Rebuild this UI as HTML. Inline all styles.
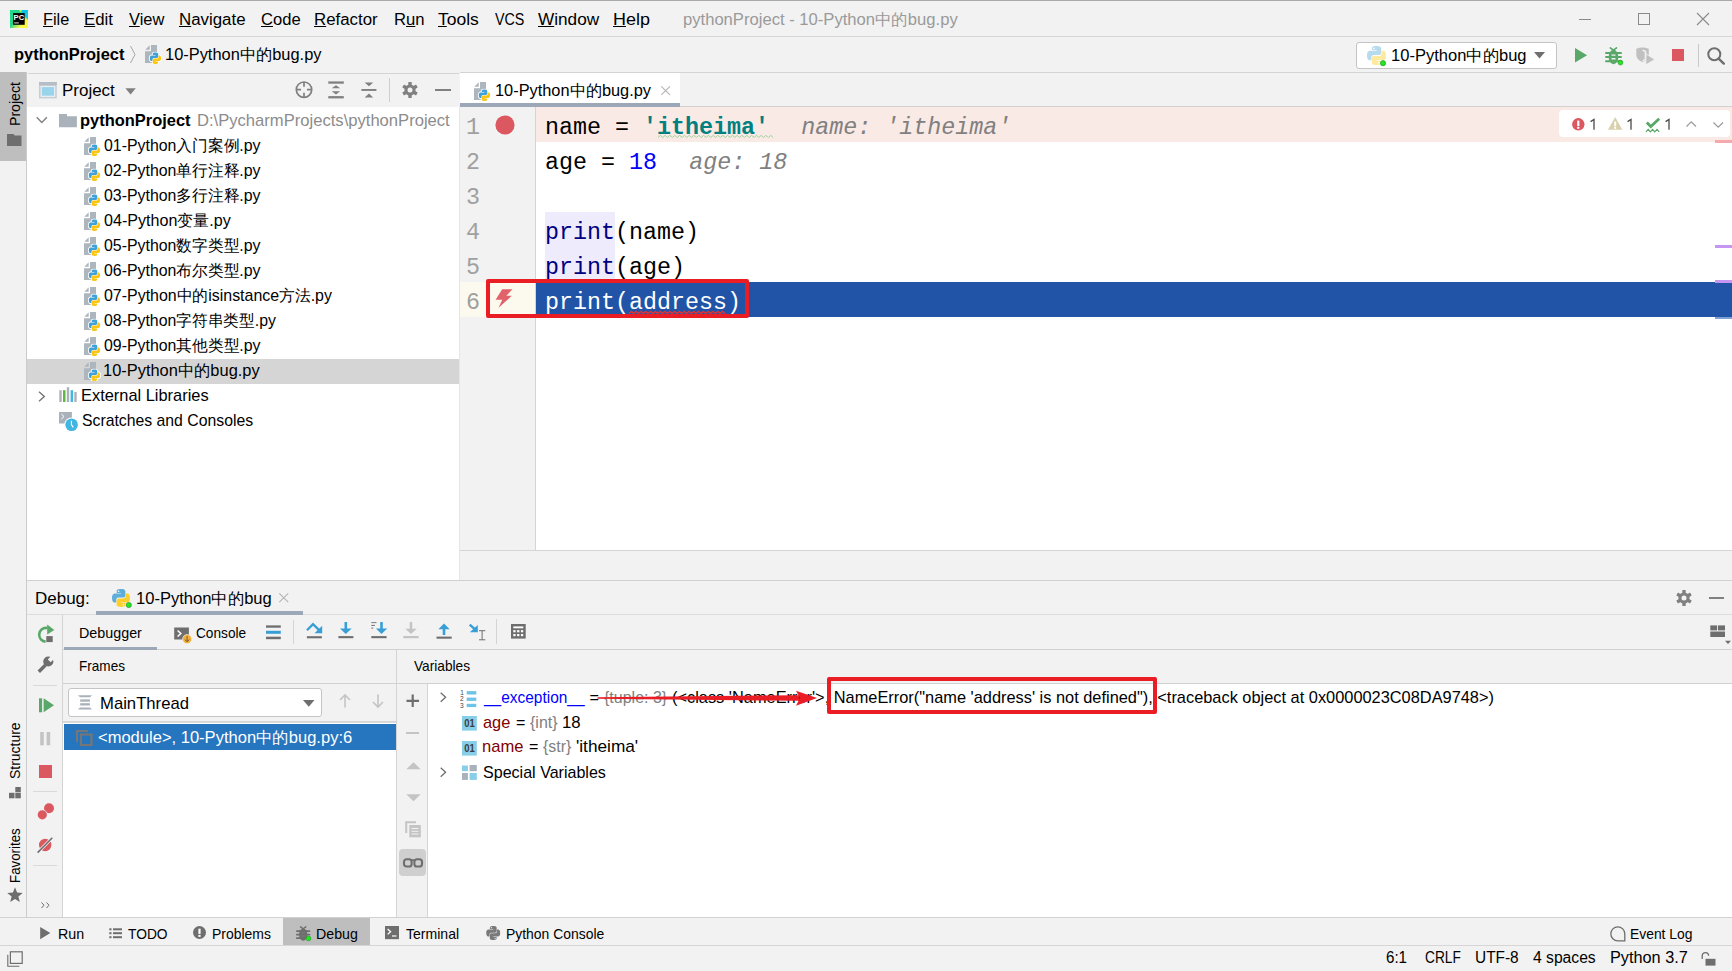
<!DOCTYPE html>
<html><head><meta charset="utf-8">
<style>
*{box-sizing:border-box;margin:0;padding:0}
html,body{width:1732px;height:971px;overflow:hidden;background:#f2f2f2;position:relative;font-family:"Liberation Sans",sans-serif;color:#000}
.a{position:absolute}
.t{position:absolute;z-index:1;white-space:pre;line-height:1;font-family:"Liberation Sans",sans-serif;transform-origin:0 0}
svg{position:absolute;overflow:visible}
u{text-decoration:underline;text-underline-offset:1.2px;text-decoration-thickness:1px}
</style></head><body>
<svg width="0" height="0" style="position:absolute;left:0;top:0">
<defs>
<symbol id="pyf" viewBox="0 0 17 19">
<path d="M0.3,4.7 L4.7,0.3 L4.7,4.7 Z" fill="#adb5bd"/>
<path d="M0,6.3 H6 V0 H12 V18 H0 Z" fill="#adb5bd"/>
<g transform="translate(4.8,7.6) scale(0.63)">
<path d="M8.9,0 C4.4,0 4.7,1.9 4.7,1.9 L4.7,3.9 L9,3.9 L9,4.5 L3,4.5 C3,4.5 0,4.2 0,8.9 C0,13.5 2.6,13.4 2.6,13.4 L4.2,13.4 L4.2,11.2 C4.2,11.2 4.1,8.6 6.7,8.6 L11,8.6 C11,8.6 13.4,8.6 13.4,6.3 L13.4,2.4 C13.4,2.4 13.8,0 8.9,0 Z M9.1,18 C13.6,18 13.3,16.1 13.3,16.1 L13.3,14.1 L9,14.1 L9,13.5 L15,13.5 C15,13.5 18,13.8 18,9.1 C18,4.5 15.4,4.6 15.4,4.6 L13.8,4.6 L13.8,6.8 C13.8,6.8 13.9,9.4 11.3,9.4 L7,9.4 C7,9.4 4.6,9.4 4.6,11.7 L4.6,15.6 C4.6,15.6 4.2,18 9.1,18 Z" fill="#fff" stroke="#fff" stroke-width="3" stroke-linejoin="round"/>
<path d="M8.9,0 C4.4,0 4.7,1.9 4.7,1.9 L4.7,3.9 L9,3.9 L9,4.5 L3,4.5 C3,4.5 0,4.2 0,8.9 C0,13.5 2.6,13.4 2.6,13.4 L4.2,13.4 L4.2,11.2 C4.2,11.2 4.1,8.6 6.7,8.6 L11,8.6 C11,8.6 13.4,8.6 13.4,6.3 L13.4,2.4 C13.4,2.4 13.8,0 8.9,0 Z" fill="#40a0d8"/>
<path d="M9.1,18 C13.6,18 13.3,16.1 13.3,16.1 L13.3,14.1 L9,14.1 L9,13.5 L15,13.5 C15,13.5 18,13.8 18,9.1 C18,4.5 15.4,4.6 15.4,4.6 L13.8,4.6 L13.8,6.8 C13.8,6.8 13.9,9.4 11.3,9.4 L7,9.4 C7,9.4 4.6,9.4 4.6,11.7 L4.6,15.6 C4.6,15.6 4.2,18 9.1,18 Z" fill="#fdc614"/>
</g>
</symbol>
</defs></svg>
<div class="a" style="left:0px;top:0px;width:1732px;height:1px;background:#a9a9a9;"></div>
<div class="a" style="left:0px;top:36px;width:1732px;height:1px;background:#d6d6d6;"></div>
<div class="a" style="left:0px;top:72px;width:26px;height:89px;background:#bebebe;"></div>
<div class="a" style="left:26px;top:72px;width:1px;height:845px;background:#cbcbcb;"></div>
<div class="a" style="left:28px;top:73px;width:431px;height:1px;background:#d4d4d4;"></div>
<div class="a" style="left:27px;top:107px;width:433px;height:473px;background:#fff;"></div>
<div class="a" style="left:27px;top:359px;width:432px;height:25px;background:#d5d5d5;"></div>
<div class="a" style="left:459px;top:107px;width:1px;height:473px;background:#e6e6e6;"></div>
<div class="a" style="left:460px;top:72px;width:1272px;height:1px;background:#d4d4d4;"></div>
<div class="a" style="left:680px;top:106px;width:1052px;height:1px;background:#d1d1d1;"></div>
<div class="a" style="left:460px;top:73px;width:220px;height:34px;background:#fff;"></div>
<div class="a" style="left:460px;top:103px;width:220px;height:4px;background:#9ca7b8;"></div>
<div class="a" style="left:460px;top:107px;width:1272px;height:443px;background:#fff;"></div>
<div class="a" style="left:460px;top:107px;width:75px;height:443px;background:#f2f2f2;"></div>
<div class="a" style="left:535px;top:107px;width:1px;height:443px;background:#d4d4d4;"></div>
<div class="a" style="left:536px;top:107px;width:1196px;height:35px;background:#faeae6;"></div>
<div class="a" style="left:460px;top:282px;width:75px;height:35px;background:#fcfaee;"></div>
<div class="a" style="left:536px;top:282px;width:1196px;height:35px;background:#2154a6;"></div>
<div class="a" style="left:460px;top:550px;width:1272px;height:1px;background:#d6d6d6;"></div>
<div class="a" style="left:27px;top:580px;width:1705px;height:1px;background:#d1d1d1;"></div>
<div class="a" style="left:27px;top:614px;width:1705px;height:1px;background:#dcdcdc;"></div>
<div class="a" style="left:96px;top:611px;width:207px;height:4px;background:#9ca7b8;"></div>
<div class="a" style="left:62px;top:615px;width:1px;height:302px;background:#d4d4d4;"></div>
<div class="a" style="left:63px;top:649px;width:1669px;height:1px;background:#d1d1d1;"></div>
<div class="a" style="left:64px;top:647px;width:93px;height:3px;background:#9ca7b8;"></div>
<div class="a" style="left:63px;top:683px;width:1669px;height:1px;background:#d1d1d1;"></div>
<div class="a" style="left:396px;top:650px;width:1px;height:267px;background:#d4d4d4;"></div>
<div class="a" style="left:63px;top:723px;width:333px;height:194px;background:#fff;"></div>
<div class="a" style="left:63px;top:722px;width:333px;height:1px;background:#dcdcdc;"></div>
<div class="a" style="left:64px;top:724px;width:332px;height:26px;background:#2675bf;"></div>
<div class="a" style="left:427px;top:684px;width:1px;height:233px;background:#d4d4d4;"></div>
<div class="a" style="left:428px;top:684px;width:1304px;height:233px;background:#fff;"></div>
<div class="a" style="left:0px;top:917px;width:1732px;height:1px;background:#d1d1d1;"></div>
<div class="a" style="left:283px;top:918px;width:87px;height:27px;background:#bebebe;"></div>
<div class="a" style="left:0px;top:945px;width:1732px;height:1px;background:#d6d6d6;"></div>
<div class="t" style="left:43.38px;top:11.50px;font-size:16px;color:#000;transform:scaleX(1.0168);"><u>F</u>ile</div>
<div class="t" style="left:83.95px;top:11.50px;font-size:16px;color:#000;transform:scaleX(1.0507);"><u>E</u>dit</div>
<div class="t" style="left:128.90px;top:11.50px;font-size:16px;color:#000;transform:scaleX(1.0277);"><u>V</u>iew</div>
<div class="t" style="left:178.95px;top:11.50px;font-size:16px;color:#000;transform:scaleX(1.0538);"><u>N</u>avigate</div>
<div class="t" style="left:261.00px;top:11.50px;font-size:16px;color:#000;transform:scaleX(1.0352);"><u>C</u>ode</div>
<div class="t" style="left:313.95px;top:11.50px;font-size:16px;color:#000;transform:scaleX(1.0525);"><u>R</u>efactor</div>
<div class="t" style="left:393.66px;top:11.50px;font-size:16px;color:#000;transform:scaleX(1.0418);">R<u>u</u>n</div>
<div class="t" style="left:438.00px;top:11.50px;font-size:16px;color:#000;transform:scaleX(1.0923);"><u>T</u>ools</div>
<div class="t" style="left:494.50px;top:11.50px;font-size:16px;color:#000;transform:scaleX(0.8937);">VCS</div>
<div class="t" style="left:537.70px;top:11.50px;font-size:16px;color:#000;transform:scaleX(1.0741);"><u>W</u>indow</div>
<div class="t" style="left:612.88px;top:11.50px;font-size:16px;color:#000;transform:scaleX(1.1216);"><u>H</u>elp</div>
<div class="t" style="left:682.67px;top:10.53px;font-size:16.2px;color:#9a9a9a;transform:scaleX(1.0259);">pythonProject - 10-Python中的bug.py</div>
<div class="t" style="left:14.29px;top:46.23px;font-size:16.2px;color:#000;font-weight:700;transform:scaleX(1.0145);">pythonProject</div>
<svg style="left:129px;top:45px;" width="8" height="19" viewBox="0 0 8 19"><path d="M1.5,1 L6,9.5 L1.5,18" fill="none" stroke="#a6a6a6" stroke-width="1"/></svg>
<svg style="left:145px;top:45px;" width="17" height="19" viewBox="0 0 17 19"><use href="#pyf"/></svg>
<div class="t" style="left:164.89px;top:46.23px;font-size:16.2px;color:#000;transform:scaleX(1.0136);">10-Python中的bug.py</div>
<div class="t" style="left:62.45px;top:82.43px;font-size:16.2px;color:#000;transform:scaleX(1.0485);">Project</div>
<svg style="left:474px;top:82px;" width="17" height="19" viewBox="0 0 17 19"><use href="#pyf"/></svg>
<div class="t" style="left:494.99px;top:82.13px;font-size:16.2px;color:#000;transform:scaleX(1.0104);">10-Python中的bug.py</div>
<div class="t" style="left:80.18px;top:112.23px;font-size:16.2px;color:#000;font-weight:700;transform:scaleX(1.0154);">pythonProject</div>
<div class="t" style="left:196.77px;top:112.23px;font-size:16.2px;color:#8c8c8c;transform:scaleX(1.0252);">D:\PycharmProjects\pythonProject</div>
<svg style="left:84px;top:137px;" width="17" height="19" viewBox="0 0 17 19"><use href="#pyf"/></svg>
<div class="t" style="left:104.30px;top:137.23px;font-size:16.2px;color:#000;transform:scaleX(0.9813);">01-Python入门案例.py</div>
<svg style="left:84px;top:162px;" width="17" height="19" viewBox="0 0 17 19"><use href="#pyf"/></svg>
<div class="t" style="left:104.30px;top:162.23px;font-size:16.2px;color:#000;transform:scaleX(0.9813);">02-Python单行注释.py</div>
<svg style="left:84px;top:187px;" width="17" height="19" viewBox="0 0 17 19"><use href="#pyf"/></svg>
<div class="t" style="left:104.30px;top:187.23px;font-size:16.2px;color:#000;transform:scaleX(0.9813);">03-Python多行注释.py</div>
<svg style="left:84px;top:212px;" width="17" height="19" viewBox="0 0 17 19"><use href="#pyf"/></svg>
<div class="t" style="left:104.30px;top:212.23px;font-size:16.2px;color:#000;transform:scaleX(0.9946);">04-Python变量.py</div>
<svg style="left:84px;top:237px;" width="17" height="19" viewBox="0 0 17 19"><use href="#pyf"/></svg>
<div class="t" style="left:104.30px;top:237.23px;font-size:16.2px;color:#000;transform:scaleX(0.9813);">05-Python数字类型.py</div>
<svg style="left:84px;top:262px;" width="17" height="19" viewBox="0 0 17 19"><use href="#pyf"/></svg>
<div class="t" style="left:104.30px;top:262.23px;font-size:16.2px;color:#000;transform:scaleX(0.9813);">06-Python布尔类型.py</div>
<svg style="left:84px;top:287px;" width="17" height="19" viewBox="0 0 17 19"><use href="#pyf"/></svg>
<div class="t" style="left:104.30px;top:287.23px;font-size:16.2px;color:#000;transform:scaleX(0.9850);">07-Python中的isinstance方法.py</div>
<svg style="left:84px;top:312px;" width="17" height="19" viewBox="0 0 17 19"><use href="#pyf"/></svg>
<div class="t" style="left:104.30px;top:312.23px;font-size:16.2px;color:#000;transform:scaleX(0.9802);">08-Python字符串类型.py</div>
<svg style="left:84px;top:337px;" width="17" height="19" viewBox="0 0 17 19"><use href="#pyf"/></svg>
<div class="t" style="left:104.30px;top:337.23px;font-size:16.2px;color:#000;transform:scaleX(0.9813);">09-Python其他类型.py</div>
<svg style="left:84px;top:362px;" width="17" height="19" viewBox="0 0 17 19"><use href="#pyf"/></svg>
<div class="t" style="left:103.29px;top:362.23px;font-size:16.2px;color:#000;transform:scaleX(1.0149);">10-Python中的bug.py</div>
<div class="t" style="left:80.79px;top:387.23px;font-size:16.2px;color:#000;transform:scaleX(1.0131);">External Libraries</div>
<div class="t" style="left:81.80px;top:411.73px;font-size:16.2px;color:#000;transform:scaleX(0.9751);">Scratches and Consoles</div>
<div class="t" style="left:466.00px;top:117.17px;font-size:23.33px;color:#a0a0a0;font-family:'Liberation Mono',monospace;">1</div>
<div class="t" style="left:466.00px;top:152.17px;font-size:23.33px;color:#a0a0a0;font-family:'Liberation Mono',monospace;">2</div>
<div class="t" style="left:466.00px;top:187.17px;font-size:23.33px;color:#a0a0a0;font-family:'Liberation Mono',monospace;">3</div>
<div class="t" style="left:466.00px;top:222.17px;font-size:23.33px;color:#a0a0a0;font-family:'Liberation Mono',monospace;">4</div>
<div class="t" style="left:466.00px;top:257.17px;font-size:23.33px;color:#a0a0a0;font-family:'Liberation Mono',monospace;">5</div>
<div class="t" style="left:466.00px;top:292.17px;font-size:23.33px;color:#a0a0a0;font-family:'Liberation Mono',monospace;">6</div>
<div class="t" style="left:545.00px;top:117.17px;font-size:23.33px;color:#000;font-family:'Liberation Mono',monospace;">name = </div>
<div class="t" style="left:643.00px;top:117.17px;font-size:23.33px;color:#008080;font-weight:700;font-family:'Liberation Mono',monospace;">&#x27;itheima&#x27;</div>
<div class="t" style="left:801.20px;top:117.17px;font-size:23.33px;color:#808080;font-family:'Liberation Mono',monospace;font-style:italic;">name: &#x27;itheima&#x27;</div>
<div class="t" style="left:545.00px;top:152.17px;font-size:23.33px;color:#000;font-family:'Liberation Mono',monospace;">age = </div>
<div class="t" style="left:629.00px;top:152.17px;font-size:23.33px;color:#0000ff;font-family:'Liberation Mono',monospace;">18</div>
<div class="t" style="left:689.20px;top:152.17px;font-size:23.33px;color:#808080;font-family:'Liberation Mono',monospace;font-style:italic;">age: 18</div>
<div class="a" style="left:545px;top:212px;width:70px;height:67px;background:#edebfc;"></div>
<div class="t" style="left:545.00px;top:222.17px;font-size:23.33px;color:#000080;font-family:'Liberation Mono',monospace;">print</div>
<div class="t" style="left:615.00px;top:222.17px;font-size:23.33px;color:#000;font-family:'Liberation Mono',monospace;">(name)</div>
<div class="t" style="left:545.00px;top:257.17px;font-size:23.33px;color:#000080;font-family:'Liberation Mono',monospace;">print</div>
<div class="t" style="left:615.00px;top:257.17px;font-size:23.33px;color:#000;font-family:'Liberation Mono',monospace;">(age)</div>
<div class="t" style="left:545.00px;top:292.17px;font-size:23.33px;color:#fff;font-family:'Liberation Mono',monospace;">print(address)</div>
<div class="t" style="left:34.75px;top:590.23px;font-size:16.2px;color:#000;transform:scaleX(1.0493);">Debug:</div>
<div class="t" style="left:135.98px;top:590.23px;font-size:16.2px;color:#000;transform:scaleX(1.0222);">10-Python中的bug</div>
<div class="t" style="left:79.41px;top:625.96px;font-size:14.4px;color:#000;transform:scaleX(0.9950);">Debugger</div>
<div class="t" style="left:196.30px;top:625.96px;font-size:14.4px;color:#000;transform:scaleX(0.9490);">Console</div>
<div class="t" style="left:79.46px;top:658.76px;font-size:14.4px;color:#000;transform:scaleX(0.9437);">Frames</div>
<div class="t" style="left:414.40px;top:658.76px;font-size:14.4px;color:#000;transform:scaleX(0.9518);">Variables</div>
<div class="t" style="left:99.57px;top:695.23px;font-size:16.2px;color:#000;transform:scaleX(1.0300);">MainThread</div>
<div class="t" style="left:97.80px;top:728.73px;font-size:16.2px;color:#fff;transform:scaleX(1.0214);">&lt;module&gt;, 10-Python中的bug.py:6</div>
<div class="t" style="left:483.85px;top:689.13px;font-size:16.2px;color:#0000ff;transform:scaleX(0.9543);">__exception__</div>
<div class="t" style="left:589.50px;top:689.13px;font-size:16.2px;color:#000;">=</div>
<div class="t" style="left:604.00px;top:689.13px;font-size:16.2px;color:#808080;transform:scaleX(0.9891);">{tuple: 3}</div>
<div class="t" style="left:671.69px;top:689.13px;font-size:16.2px;color:#000;transform:scaleX(1.0111);">(&lt;class &#x27;NameError&#x27;&gt;, NameError(&quot;name &#x27;address&#x27; is not defined&quot;), &lt;traceback object at 0x0000023C08DA9748&gt;)</div>
<div class="t" style="left:483.00px;top:713.73px;font-size:16.2px;color:#800000;transform:scaleX(1.0109);">age</div>
<div class="t" style="left:515.60px;top:713.73px;font-size:16.2px;color:#000;transform:scaleX(0.9889);">=</div>
<div class="t" style="left:529.70px;top:713.73px;font-size:16.2px;color:#808080;transform:scaleX(0.9894);">{int}</div>
<div class="t" style="left:562.16px;top:713.73px;font-size:16.2px;color:#000;transform:scaleX(1.0351);">18</div>
<div class="t" style="left:481.98px;top:738.43px;font-size:16.2px;color:#800000;transform:scaleX(1.0231);">name</div>
<div class="t" style="left:528.50px;top:738.43px;font-size:16.2px;color:#000;transform:scaleX(0.9889);">=</div>
<div class="t" style="left:542.60px;top:738.43px;font-size:16.2px;color:#808080;transform:scaleX(0.9834);">{str}</div>
<div class="t" style="left:575.50px;top:738.43px;font-size:16.2px;color:#000;transform:scaleX(1.0640);">&#x27;itheima&#x27;</div>
<div class="t" style="left:483.00px;top:763.93px;font-size:16.2px;color:#000;transform:scaleX(0.9921);">Special Variables</div>
<div class="t" style="left:58.21px;top:926.66px;font-size:14.4px;color:#000;transform:scaleX(0.9923);">Run</div>
<div class="t" style="left:128.20px;top:926.66px;font-size:14.4px;color:#000;transform:scaleX(0.9583);">TODO</div>
<div class="t" style="left:212.43px;top:926.66px;font-size:14.4px;color:#000;transform:scaleX(0.9700);">Problems</div>
<div class="t" style="left:315.81px;top:926.66px;font-size:14.4px;color:#000;transform:scaleX(0.9854);">Debug</div>
<div class="t" style="left:405.50px;top:926.66px;font-size:14.4px;color:#000;transform:scaleX(0.9764);">Terminal</div>
<div class="t" style="left:505.63px;top:926.66px;font-size:14.4px;color:#000;transform:scaleX(0.9672);">Python Console</div>
<div class="t" style="left:1630.24px;top:927.06px;font-size:14.4px;color:#000;transform:scaleX(0.9639);">Event Log</div>
<div class="t" style="left:1386.40px;top:950.40px;font-size:16px;color:#000;transform:scaleX(0.9443);">6:1</div>
<div class="t" style="left:1424.50px;top:950.40px;font-size:16px;color:#000;transform:scaleX(0.8570);">CRLF</div>
<div class="t" style="left:1474.74px;top:950.40px;font-size:16px;color:#000;transform:scaleX(0.9633);">UTF-8</div>
<div class="t" style="left:1533.00px;top:950.40px;font-size:16px;color:#000;transform:scaleX(0.9791);">4 spaces</div>
<div class="t" style="left:1609.68px;top:950.40px;font-size:16px;color:#000;transform:scaleX(1.0172);">Python 3.7</div>
<div class="a" style="left:1355.5px;top:42px;width:201px;height:26.5px;background:#fff;border:1px solid #c4c4c4;border-radius:3px"></div>
<div class="t" style="left:1390.98px;top:46.93px;font-size:16.2px;color:#000;transform:scaleX(1.0207);">10-Python中的bug</div>
<svg style="left:10px;top:10px;" width="18" height="18" viewBox="0 0 18 18">
<defs><linearGradient id="pcg" x1="0" y1="0" x2="1" y2="1"><stop offset="0.45" stop-color="#21d789"/><stop offset="0.75" stop-color="#fcf84a"/></linearGradient></defs>
<rect x="0" y="0" width="18" height="18" fill="url(#pcg)"/>
<path d="M9,0 L18,0 L18,10 Z" fill="#07c3f2" opacity="0.9"/>
<path d="M9,0 L12,0 L11,3 Z" fill="#b6f04a"/>
<rect x="3.1" y="3.1" width="11.6" height="11.7" fill="#000"/>
<text x="3.6" y="10" font-family="Liberation Sans" font-weight="bold" font-size="7.6" fill="#fff">PC</text>
<rect x="4.2" y="12.3" width="4.6" height="1.2" fill="#bbb"/>
</svg>
<div class="a" style="left:1579px;top:19px;width:12px;height:1px;background:#8a8a8a;"></div>
<svg style="left:1638px;top:13px;" width="12" height="12" viewBox="0 0 12 12"><rect x="0.5" y="0.5" width="11" height="11" fill="none" stroke="#8a8a8a" stroke-width="1"/></svg>
<svg style="left:1697px;top:13px;" width="12" height="12" viewBox="0 0 12 12"><path d="M0,0 L12,12 M12,0 L0,12" stroke="#8a8a8a" stroke-width="1.1"/></svg>
<svg width="0" height="0" style="position:absolute;left:0;top:0"><defs>
<symbol id="pylogo" viewBox="0 0 18 18">
<path d="M8.9,0 C4.4,0 4.7,1.9 4.7,1.9 L4.7,3.9 L9,3.9 L9,4.5 L3,4.5 C3,4.5 0,4.2 0,8.9 C0,13.5 2.6,13.4 2.6,13.4 L4.2,13.4 L4.2,11.2 C4.2,11.2 4.1,8.6 6.7,8.6 L11,8.6 C11,8.6 13.4,8.6 13.4,6.3 L13.4,2.4 C13.4,2.4 13.8,0 8.9,0 Z" fill="#5eaedb"/>
<path d="M9.1,18 C13.6,18 13.3,16.1 13.3,16.1 L13.3,14.1 L9,14.1 L9,13.5 L15,13.5 C15,13.5 18,13.8 18,9.1 C18,4.5 15.4,4.6 15.4,4.6 L13.8,4.6 L13.8,6.8 C13.8,6.8 13.9,9.4 11.3,9.4 L7,9.4 C7,9.4 4.6,9.4 4.6,11.7 L4.6,15.6 C4.6,15.6 4.2,18 9.1,18 Z" fill="#ffd02b"/>
<circle cx="6.6" cy="2.2" r="0.8" fill="#fff"/>
<circle cx="11.4" cy="15.8" r="0.8" fill="#fff"/>
</symbol>
<symbol id="pylogog" viewBox="0 0 18 18">
<path d="M8.9,0 C4.4,0 4.7,1.9 4.7,1.9 L4.7,3.9 L9,3.9 L9,4.5 L3,4.5 C3,4.5 0,4.2 0,8.9 C0,13.5 2.6,13.4 2.6,13.4 L4.2,13.4 L4.2,11.2 C4.2,11.2 4.1,8.6 6.7,8.6 L11,8.6 C11,8.6 13.4,8.6 13.4,6.3 L13.4,2.4 C13.4,2.4 13.8,0 8.9,0 Z" fill="#7a7a7a"/>
<path d="M9.1,18 C13.6,18 13.3,16.1 13.3,16.1 L13.3,14.1 L9,14.1 L9,13.5 L15,13.5 C15,13.5 18,13.8 18,9.1 C18,4.5 15.4,4.6 15.4,4.6 L13.8,4.6 L13.8,6.8 C13.8,6.8 13.9,9.4 11.3,9.4 L7,9.4 C7,9.4 4.6,9.4 4.6,11.7 L4.6,15.6 C4.6,15.6 4.2,18 9.1,18 Z" fill="#7a7a7a"/>
<circle cx="6.6" cy="2.2" r="0.8" fill="#f2f2f2"/>
<circle cx="11.4" cy="15.8" r="0.8" fill="#f2f2f2"/>
</symbol>
<symbol id="bug" viewBox="0 0 17 18">
<path d="M5.3,0.9 L8.4,3.2 L11.5,0.9" fill="none" stroke="currentColor" stroke-width="1.6" stroke-linecap="round" stroke-linejoin="round"/>
<ellipse cx="8.5" cy="10" rx="4.9" ry="7.2" fill="currentColor"/>
<path d="M1,5.9 H16 M1,10.1 H16 M1,14.2 H16" stroke="currentColor" stroke-width="2" stroke-linecap="round"/>
<path d="M6.5,8.1 H10.5 M6.5,11.8 H10.5" style="stroke:var(--bg,#f2f2f2)" stroke-width="1.4"/>
</symbol>
</defs></svg>
<svg style="left:1367px;top:46px;" width="19" height="19" viewBox="0 0 19 19"><use href="#pylogo" opacity="0.45"/><circle cx="16" cy="17.2" r="2.6" fill="#1ee81e" stroke="#2c9a2c" stroke-width="0.7"/></svg>
<svg style="left:1534px;top:52px;" width="11" height="7" viewBox="0 0 11 7"><path d="M0,0 H11 L5.5,6.5 Z" fill="#6e6e6e"/></svg>
<svg style="left:1575px;top:47.7px;" width="12" height="15" viewBox="0 0 12 15"><path d="M0,0 L0,14.6 L12.1,7.2 Z" fill="#59a869"/></svg>
<svg style="left:1604.5px;top:46.5px;" width="17" height="18" viewBox="0 0 17 18"><use href="#bug" style="color:#59a869"/></svg>
<svg style="left:1617.5px;top:60px;" width="5" height="5" viewBox="0 0 5 5"><circle cx="2.5" cy="2.6" r="2.4" fill="#1ee81e" stroke="#2a8a2a" stroke-width="0.6"/></svg>
<svg style="left:1636px;top:47px;" width="19" height="18" viewBox="0 0 19 18"><path d="M0.3,1.8 Q6.5,-0.8 12.8,1.8 V8 Q12.8,12.5 6.5,15.2 Q0.3,12.5 0.3,8 Z" fill="#c0c0c0"/><path d="M6.5,3.5 Q8.5,3.5 9.5,4.5 V12 Q8,13.5 6.5,14" fill="none" stroke="#f2f2f2" stroke-width="1.6"/><path d="M9.9,6.9 L9.9,17.8 L18.8,12.4 Z" fill="#c0c0c0" stroke="#f2f2f2" stroke-width="0.8"/></svg>
<div class="a" style="left:1672px;top:49px;width:12px;height:12px;background:#db5860;"></div>
<div class="a" style="left:1698px;top:43.5px;width:1px;height:23px;background:#c9c9c9;"></div>
<svg style="left:1707px;top:46.5px;" width="19" height="18" viewBox="0 0 19 18"><circle cx="7.3" cy="7.3" r="6" fill="none" stroke="#6e6e6e" stroke-width="2"/><path d="M11.6,11.6 L16.8,16.6" stroke="#6e6e6e" stroke-width="2.4" stroke-linecap="round"/></svg>
<svg style="left:39px;top:82px;" width="18" height="17" viewBox="0 0 18 17"><rect x="0" y="0" width="17.8" height="16.4" fill="#c6ced4"/><rect x="0" y="0" width="17.8" height="3" fill="#b5bec5"/><rect x="1.6" y="4.1" width="14.6" height="10.8" fill="#eef1f3"/><rect x="2.8" y="5.1" width="12.3" height="8.6" fill="#9ad3ec"/></svg>
<svg style="left:125px;top:88px;" width="11" height="7" viewBox="0 0 11 7"><path d="M0.4,0.2 H10.8 L5.6,6.4 Z" fill="#808080"/></svg>
<svg style="left:295px;top:81px;" width="18" height="18" viewBox="0 0 18 18"><circle cx="9" cy="8.7" r="7.7" fill="none" stroke="#808080" stroke-width="1.7"/><path d="M9,1 V5.7 M9,11.7 V16.4 M1.3,8.7 H6 M12,8.7 H16.7" stroke="#808080" stroke-width="1.7"/></svg>
<svg style="left:328px;top:81px;" width="16" height="18" viewBox="0 0 16 18"><rect x="0.3" y="0.4" width="15.5" height="2.3" fill="#808080"/><rect x="0.3" y="15.1" width="15.5" height="2.3" fill="#808080"/><path d="M3.7,7.3 H12.2 L8,4.3 Z M3.7,10.2 H12.2 L8,13.6 Z" fill="#808080"/></svg>
<svg style="left:361px;top:82px;" width="16" height="16" viewBox="0 0 16 16"><rect x="0.4" y="7" width="15" height="1.9" fill="#808080"/><path d="M3.6,0.4 H12.2 L8,4.3 Z M3.6,15.6 H12.2 L8,11.5 Z" fill="#808080"/></svg>
<div class="a" style="left:389px;top:78px;width:1px;height:23.5px;background:#cfcfcf;"></div>
<svg width="0" height="0" style="position:absolute;left:0;top:0"><defs>
<symbol id="gear" viewBox="-8 -8 16 16">
<g fill="#808080">
<circle r="5.6"/>
<rect x="-1.7" y="-8" width="3.4" height="16" rx="0.6"/>
<rect x="-1.7" y="-8" width="3.4" height="16" rx="0.6" transform="rotate(60)"/>
<rect x="-1.7" y="-8" width="3.4" height="16" rx="0.6" transform="rotate(120)"/>
</g>
<circle r="2.5" fill="#f2f2f2"/>
</symbol></defs></svg>
<svg style="left:402px;top:82px;" width="16" height="16" viewBox="0 0 16 16"><use href="#gear"/></svg>
<div class="a" style="left:435px;top:89px;width:15.5px;height:2px;background:#808080;"></div>
<div class="t" style="left:6.65px;top:126.34px;font-size:15px;color:#000;transform:rotate(-90deg) scaleX(0.9416);">Project</div>
<svg style="left:7px;top:133.5px;" width="15" height="12" viewBox="0 0 15 12"><path d="M0,0 H6.5 L7.8,1.6 H14.5 V12 H0 Z" fill="#6e6e6e"/></svg>
<div class="t" style="left:6.95px;top:778.50px;font-size:15px;color:#000;transform:rotate(-90deg) scaleX(0.9304);">Structure</div>
<svg style="left:8.5px;top:787px;" width="12" height="11.5" viewBox="0 0 12 11.5"><rect x="0" y="5.8" width="5.5" height="5.5" fill="#6e6e6e"/><rect x="6.3" y="5.8" width="5.5" height="5.5" fill="#6e6e6e"/><rect x="6.3" y="0" width="5.5" height="5.2" fill="#6e6e6e"/></svg>
<div class="t" style="left:6.95px;top:882.69px;font-size:15px;color:#000;transform:rotate(-90deg) scaleX(0.8873);">Favorites</div>
<svg style="left:6.5px;top:887px;" width="16" height="16" viewBox="0 0 16 16"><path d="M8,0.3 L10.1,5.6 L15.7,5.9 L11.4,9.5 L12.8,15 L8,11.9 L3.2,15 L4.6,9.5 L0.3,5.9 L5.9,5.6 Z" fill="#6e6e6e"/></svg>
<svg style="left:36px;top:116px;" width="12" height="8" viewBox="0 0 12 8"><path d="M0.7,1.2 L5.8,6.4 L10.9,1.2" fill="none" stroke="#808080" stroke-width="1.4"/></svg>
<svg style="left:59px;top:113.8px;" width="18" height="13.2" viewBox="0 0 18 13.2"><path d="M0,0 H8 V2.3 H17.9 V13.2 H0 Z" fill="#a9b2ba"/></svg>
<svg style="left:37.5px;top:390.5px;" width="8" height="11" viewBox="0 0 8 11"><path d="M1,0.8 L6.3,5.5 L1,10.3" fill="none" stroke="#777" stroke-width="1.4"/></svg>
<svg style="left:59px;top:387px;" width="18" height="15.2" viewBox="0 0 18 15.2"><rect x="0.3" y="3.2" width="2.4" height="11.8" fill="#a9b2ba"/><rect x="4" y="3.2" width="2.5" height="11.8" fill="#62b543"/><rect x="7.8" y="0.2" width="2.4" height="14.8" fill="#a9b2ba"/><rect x="11.6" y="3.2" width="2.4" height="11.8" fill="#40b6e0"/><rect x="15.3" y="5" width="2.4" height="10" fill="#a9b2ba"/></svg>
<svg style="left:59px;top:412px;" width="20" height="20" viewBox="0 0 20 20"><rect x="0" y="0" width="12.9" height="11.5" fill="#a9b2ba"/><path d="M2.3,2 L5,4.5 L2.3,7" fill="none" stroke="#fff" stroke-width="1"/><circle cx="12.6" cy="12.7" r="7.3" fill="#fff"/><circle cx="12.6" cy="12.7" r="6.3" fill="#40b6e0"/><path d="M12.4,8.8 V12.6 L14.2,15.4" fill="none" stroke="#fff" stroke-width="1.1"/></svg>
<svg style="left:660.5px;top:85.5px;" width="9.5" height="9" viewBox="0 0 9.5 9"><path d="M0.3,0.3 L9,8.8 M9,0.3 L0.3,8.8" stroke="#b4b4b4" stroke-width="1.1"/></svg>
<svg style="left:494.5px;top:114.5px;" width="20" height="20" viewBox="0 0 20 20"><circle cx="10" cy="10" r="9.6" fill="#db5860"/></svg>
<svg style="left:495px;top:289px;" width="18" height="19" viewBox="0 0 18 19"><path d="M7.2,0.3 H17.5 L11.3,6.8 H16.8 L3.6,18.7 L7.2,10.7 H0.6 Z" fill="#e0626a"/></svg>
<div class="a" style="z-index:3;left:486px;top:279.3px;width:263px;height:38.7px;border:4px solid #ea1c24;border-radius:2px"></div>
<svg style="left:629px;top:311px;" width="97" height="3" viewBox="0 0 97 3"><path d="M0,2.5 L2.4,0.4 L4.8,2.5 L7.2,0.4 L9.6,2.5 L12.0,0.4 L14.4,2.5 L16.8,0.4 L19.2,2.5 L21.6,0.4 L24.0,2.5 L26.4,0.4 L28.8,2.5 L31.2,0.4 L33.6,2.5 L36.0,0.4 L38.4,2.5 L40.8,0.4 L43.2,2.5 L45.6,0.4 L48.0,2.5 L50.4,0.4 L52.8,2.5 L55.2,0.4 L57.6,2.5 L60.0,0.4 L62.4,2.5 L64.8,0.4 L67.2,2.5 L69.6,0.4 L72.0,2.5 L74.4,0.4 L76.8,2.5 L79.2,0.4 L81.6,2.5 L84.0,0.4 L86.4,2.5 L88.8,0.4 L91.2,2.5 L93.6,0.4 L96.0,2.5 " fill="none" stroke="#e8302e" stroke-width="1.3"/></svg>
<svg style="left:658px;top:135px;" width="116" height="3" viewBox="0 0 116 3"><path d="M0,2.5 L2.4,0.4 L4.8,2.5 L7.2,0.4 L9.6,2.5 L12.0,0.4 L14.4,2.5 L16.8,0.4 L19.2,2.5 L21.6,0.4 L24.0,2.5 L26.4,0.4 L28.8,2.5 L31.2,0.4 L33.6,2.5 L36.0,0.4 L38.4,2.5 L40.8,0.4 L43.2,2.5 L45.6,0.4 L48.0,2.5 L50.4,0.4 L52.8,2.5 L55.2,0.4 L57.6,2.5 L60.0,0.4 L62.4,2.5 L64.8,0.4 L67.2,2.5 L69.6,0.4 L72.0,2.5 L74.4,0.4 L76.8,2.5 L79.2,0.4 L81.6,2.5 L84.0,0.4 L86.4,2.5 L88.8,0.4 L91.2,2.5 L93.6,0.4 L96.0,2.5 L98.4,0.4 L100.8,2.5 L103.2,0.4 L105.6,2.5 L108.0,0.4 L110.4,2.5 L112.8,0.4 L115.2,2.5 " fill="none" stroke="#9fd3a0" stroke-width="1"/></svg>
<div class="a" style="left:1559px;top:110px;width:171px;height:27px;background:#fff;border-radius:4px"></div>
<svg style="left:1571.5px;top:117.8px;" width="13" height="13" viewBox="0 0 13 13"><circle cx="6.3" cy="6.3" r="6.2" fill="#db5860"/><rect x="5.2" y="2.6" width="2.2" height="5.4" fill="#fff"/><rect x="5.2" y="8.8" width="2.2" height="2" fill="#fff"/></svg>
<svg style="left:1590px;top:119px;" width="6" height="11" viewBox="0 0 6 11"><path d="M0.6,2.6 L4,0.4 V10.8" fill="none" stroke="#4a4a4a" stroke-width="1.3"/></svg>
<svg style="left:1607.8px;top:117px;" width="14.5" height="13" viewBox="0 0 14.5 13"><path d="M7.2,0 L14.3,12.8 H0 Z" fill="#d8d0ab"/><rect x="6.2" y="4.5" width="2" height="4.8" fill="#fff"/><rect x="6.2" y="10" width="2" height="1.8" fill="#fff"/></svg>
<svg style="left:1627.1px;top:119px;" width="6" height="11" viewBox="0 0 6 11"><path d="M0.6,2.6 L4,0.4 V10.8" fill="none" stroke="#4a4a4a" stroke-width="1.3"/></svg>
<svg style="left:1646px;top:118px;" width="14" height="15" viewBox="0 0 14 15"><path d="M0.8,4.6 L4.8,8.6 L13.2,0.8" fill="none" stroke="#59a869" stroke-width="2.8"/><path d="M0,13.8 L2.2,11.3 L4.4,13.8 L6.6,11.3 L8.8,13.8 L11,11.3 L13.2,13.8" fill="none" stroke="#59a869" stroke-width="1.2"/></svg>
<svg style="left:1665.2px;top:119px;" width="6" height="11" viewBox="0 0 6 11"><path d="M0.6,2.6 L4,0.4 V10.8" fill="none" stroke="#4a4a4a" stroke-width="1.3"/></svg>
<svg style="left:1686px;top:120.5px;" width="10.5" height="6" viewBox="0 0 10.5 6"><path d="M0.5,5.5 L5.2,0.8 L10,5.5" fill="none" stroke="#9a9a9a" stroke-width="1.2"/></svg>
<svg style="left:1713px;top:121.5px;" width="10.5" height="6" viewBox="0 0 10.5 6"><path d="M0.5,0.5 L5.2,5.2 L10,0.5" fill="none" stroke="#9a9a9a" stroke-width="1.2"/></svg>
<div class="a" style="left:1715px;top:140px;width:17px;height:2.5px;background:#f6a9ac;"></div>
<div class="a" style="left:1715px;top:245px;width:17px;height:2.5px;background:#c597f0;"></div>
<div class="a" style="left:1715px;top:280px;width:17px;height:2.5px;background:#c597f0;"></div>
<div class="a" style="left:1715px;top:317px;width:17px;height:1.5px;background:#7fa0d6;"></div>
<svg style="left:112px;top:589px;" width="18" height="18" viewBox="0 0 18 18"><use href="#pylogo"/></svg>
<svg style="left:126px;top:602px;" width="6" height="6" viewBox="0 0 6 6"><circle cx="2.8" cy="3" r="2.6" fill="#1ee81e" stroke="#2a8a2a" stroke-width="0.6"/></svg>
<svg style="left:279px;top:593px;" width="9.5" height="9.5" viewBox="0 0 9.5 9.5"><path d="M0.3,0.3 L9.2,9.2 M9.2,0.3 L0.3,9.2" stroke="#b4b4b4" stroke-width="1.1"/></svg>
<svg style="left:1676px;top:590px;" width="16" height="16" viewBox="0 0 16 16"><use href="#gear"/></svg>
<div class="a" style="left:1708.5px;top:597px;width:15px;height:2px;background:#808080;"></div>
<svg style="left:1710px;top:624.5px;" width="22" height="19.5" viewBox="0 0 22 19.5"><rect x="0.3" y="0.4" width="6.8" height="5" fill="#6e6e6e"/><rect x="8" y="0.4" width="7" height="5" fill="#6e6e6e"/><rect x="0.3" y="6.5" width="14.7" height="5.5" fill="#6e6e6e"/><path d="M15,15.8 H21 L18,19 Z" fill="#6e6e6e"/></svg>
<svg style="left:37px;top:623.5px;" width="18" height="19" viewBox="0 0 18 19"><path d="M8.6,17.6 A6.8,6.8 0 1 1 9.5,3.9 L10.5,3.9" fill="none" stroke="#59a869" stroke-width="2.6"/><path d="M10.2,0.5 L17.3,5.9 L10.2,10.5 Z" fill="#59a869"/><rect x="9.3" y="12.1" width="6.4" height="6" fill="#6e6e6e"/></svg>
<svg style="left:37px;top:656px;" width="17" height="18" viewBox="0 0 17 18"><path d="M1.8,15.8 L8.5,9" stroke="#6e6e6e" stroke-width="3.4" stroke-linecap="butt"/><circle cx="11.3" cy="5.5" r="5.1" fill="#6e6e6e"/><path d="M10.8,3.5 L14,0 L17,2.8 L13.8,6.2 Z" fill="#f2f2f2"/></svg>
<div class="a" style="left:33px;top:685px;width:24px;height:1px;background:#d9d9d9;"></div>
<svg style="left:39px;top:698px;" width="16" height="15" viewBox="0 0 16 15"><rect x="0" y="0.3" width="3.1" height="14" fill="#59a869"/><path d="M4.6,0.3 L15,7.3 L4.6,14.3 Z" fill="#59a869"/></svg>
<svg style="left:39.5px;top:731.5px;" width="11" height="14" viewBox="0 0 11 14"><rect x="0.2" y="0" width="3.6" height="13.3" fill="#c4c4c4"/><rect x="6.6" y="0" width="3.6" height="13.3" fill="#c4c4c4"/></svg>
<div class="a" style="left:39px;top:764.5px;width:12.5px;height:13px;background:#db5860;"></div>
<div class="a" style="left:33px;top:791px;width:24px;height:1px;background:#d9d9d9;"></div>
<svg style="left:37.4px;top:803px;" width="17" height="17.5" viewBox="0 0 17 17.5"><circle cx="12" cy="5.3" r="5" fill="#db5860"/><circle cx="5.3" cy="11.8" r="5.2" fill="#f2f2f2"/><circle cx="5.3" cy="11.8" r="4.6" fill="#db5860"/></svg>
<svg style="left:37.4px;top:836.5px;" width="16" height="16.5" viewBox="0 0 16 16.5"><circle cx="8.2" cy="8" r="6.2" fill="#db5860"/><path d="M0.6,15.6 L15.3,0.8" stroke="#f2f2f2" stroke-width="3"/><path d="M0.6,15.6 L15.3,0.8" stroke="#6e6e6e" stroke-width="1.5"/></svg>
<div class="a" style="left:33px;top:865px;width:24px;height:1px;background:#d9d9d9;"></div>
<svg style="left:41px;top:902px;" width="10" height="7" viewBox="0 0 10 7"><path d="M0.5,0.5 L3,3.2 L0.5,6 M5.5,0.5 L8,3.2 L5.5,6" fill="none" stroke="#6e6e6e" stroke-width="1"/></svg>
<svg style="left:173.5px;top:626.5px;" width="18" height="17" viewBox="0 0 18 17"><rect x="0.2" y="0.5" width="14.7" height="12" fill="#6e6e6e"/><path d="M3.6,3.5 L6.8,6.5 L3.6,9.5" fill="none" stroke="#fff" stroke-width="1.6"/><circle cx="13.1" cy="12.1" r="4.6" fill="#f4af3d" stroke="#f2f2f2" stroke-width="0.6"/><path d="M13.1,9.2 V14.6 M11,12.6 L13.1,14.7 L15.2,12.6" fill="none" stroke="#6e5a2e" stroke-width="1"/></svg>
<svg style="left:265.5px;top:624.5px;" width="15" height="15" viewBox="0 0 15 15"><rect x="0" y="0.4" width="14.8" height="2.3" fill="#6e6e6e"/><rect x="0" y="5.8" width="14.8" height="3" fill="#389fd6"/><rect x="0" y="11.7" width="14.8" height="2.5" fill="#6e6e6e"/></svg>
<div class="a" style="left:293px;top:619.5px;width:1px;height:24.5px;background:#d4d4d4;"></div>
<svg style="left:305.5px;top:623px;" width="17" height="16" viewBox="0 0 17 16"><path d="M1,7.3 L7,1.1 L14.2,8.1" fill="none" stroke="#389fd6" stroke-width="2.3"/><path d="M8.5,10.3 H16.2 V2.8 Z" fill="#389fd6"/><rect x="0.9" y="13.2" width="15" height="2.1" fill="#6e6e6e"/></svg>
<svg style="left:338px;top:622px;" width="16" height="17" viewBox="0 0 16 17"><rect x="6.5" y="0" width="2.6" height="7.5" fill="#389fd6"/><path d="M2,6.4 H13.7 L7.8,12 Z" fill="#389fd6"/><rect x="0.4" y="14.1" width="15" height="2.1" fill="#6e6e6e"/></svg>
<svg style="left:371px;top:622px;" width="17" height="17" viewBox="0 0 17 17"><rect x="0.3" y="0.2" width="5.2" height="0.9" fill="#6e6e6e"/><rect x="0.3" y="2.9" width="3.6" height="1" fill="#6e6e6e"/><rect x="0.3" y="5.6" width="1.9" height="1" fill="#6e6e6e"/><rect x="9.2" y="0" width="2.6" height="7.5" fill="#389fd6"/><path d="M4.9,6.4 H16.2 L10.5,12 Z" fill="#389fd6"/><rect x="0.3" y="14.1" width="15.3" height="2.1" fill="#6e6e6e"/></svg>
<svg style="left:403px;top:622px;" width="16" height="17" viewBox="0 0 16 17"><rect x="6.7" y="0" width="2.5" height="7.5" fill="#c4c4c4"/><path d="M2.2,6.7 H13.7 L8,12 Z" fill="#c4c4c4"/><rect x="0.3" y="14" width="15.3" height="2.2" fill="#c4c4c4"/></svg>
<svg style="left:436px;top:622.5px;" width="16" height="17" viewBox="0 0 16 17"><path d="M2.4,6.3 H13.7 L8,0.5 Z" fill="#389fd6"/><rect x="6.7" y="5.5" width="2.6" height="6.5" fill="#389fd6"/><rect x="0.5" y="13.6" width="15.2" height="2.1" fill="#6e6e6e"/></svg>
<svg style="left:468.5px;top:623.5px;" width="17" height="16.5" viewBox="0 0 17 16.5"><path d="M0.7,0.7 L7.5,6.7" stroke="#389fd6" stroke-width="2.4"/><path d="M0.8,8.2 H8.8 V1 Z" fill="#389fd6"/><path d="M13.1,6.7 V15.8 M10,6.7 H16.3 M10,15.8 H16.3" stroke="#6e6e6e" stroke-width="1"/></svg>
<div class="a" style="left:496px;top:619px;width:1px;height:24.5px;background:#d4d4d4;"></div>
<svg style="left:510.5px;top:623.5px;" width="15" height="15" viewBox="0 0 15 15"><rect x="0" y="0" width="14.7" height="14.6" fill="#6e6e6e"/><rect x="2.3" y="2.4" width="10" height="1.9" fill="#fff"/><g fill="#fff"><rect x="2.3" y="6.1" width="2.3" height="2.2"/><rect x="6.1" y="6.1" width="2.3" height="2.2"/><rect x="9.9" y="6.1" width="2.3" height="2.2"/><rect x="2.3" y="10" width="2.3" height="2.2"/><rect x="6.1" y="10" width="2.3" height="2.2"/><rect x="9.9" y="10" width="2.3" height="2.2"/></g></svg>
<div class="a" style="left:68px;top:688px;width:254px;height:29px;background:#fff;border:1px solid #c4c4c4;border-radius:3px"></div>
<svg style="left:78px;top:695px;" width="14" height="15" viewBox="0 0 14 15"><path d="M0,0.3 H14 L12,2.3 H2 Z M0,14.4 H14 L12,12.4 H2 Z" fill="#a9b2ba"/><rect x="2.2" y="4.4" width="9.7" height="2.3" fill="#a9b2ba"/><rect x="2.2" y="8.2" width="9.7" height="2.3" fill="#a9b2ba"/></svg>
<svg style="left:302.5px;top:699.5px;" width="12" height="7" viewBox="0 0 12 7"><path d="M0,0 H11.5 L5.75,6.8 Z" fill="#6e6e6e"/></svg>
<svg style="left:339px;top:694px;" width="12" height="14" viewBox="0 0 12 14"><path d="M6,1 V13.5 M1,6 L6,1 L11,6" fill="none" stroke="#c4c4c4" stroke-width="1.6"/></svg>
<svg style="left:372px;top:694px;" width="12" height="14" viewBox="0 0 12 14"><path d="M6,0.5 V13 M1,8 L6,13 L11,8" fill="none" stroke="#c4c4c4" stroke-width="1.6"/></svg>
<div class="a" style="left:63px;top:721px;width:333px;height:1px;background:#d4d4d4;"></div>
<svg style="left:75.5px;top:729.5px;" width="17" height="16" viewBox="0 0 17 16"><path d="M1,12 V1 H12" fill="none" stroke="#767676" stroke-width="2"/><rect x="5" y="4.5" width="10.5" height="10.5" fill="none" stroke="#767676" stroke-width="2.2"/></svg>
<svg style="left:406px;top:693.5px;" width="14" height="14" viewBox="0 0 14 14"><path d="M6.7,0.5 V13 M0.5,6.8 H13" stroke="#6e6e6e" stroke-width="2.2"/></svg>
<div class="a" style="left:406px;top:732px;width:13px;height:2px;background:#c4c4c4;"></div>
<svg style="left:405.5px;top:761.5px;" width="15" height="7.5" viewBox="0 0 15 7.5"><path d="M0.3,7.2 H14.7 L7.5,0.2 Z" fill="#c4c4c4"/></svg>
<svg style="left:405.5px;top:794px;" width="15" height="7.5" viewBox="0 0 15 7.5"><path d="M0.3,0.2 H14.7 L7.5,7.2 Z" fill="#c4c4c4"/></svg>
<svg style="left:405px;top:821px;" width="16" height="17" viewBox="0 0 16 17"><path d="M1.2,12 V1.2 H11" fill="none" stroke="#c4c4c4" stroke-width="2"/><rect x="4.3" y="4" width="11.5" height="12.3" fill="#c4c4c4"/><path d="M6.5,7.5 H13.5 M6.5,10.3 H13.5 M6.5,13 H13.5" stroke="#f2f2f2" stroke-width="1"/></svg>
<div class="a" style="left:399px;top:849px;width:27px;height:27px;background:#cfcfcf;border-radius:4px"></div>
<svg style="left:402.5px;top:858px;" width="21" height="10" viewBox="0 0 21 10"><rect x="1" y="1.2" width="7.6" height="7.3" rx="2.6" fill="none" stroke="#6e6e6e" stroke-width="2.1"/><rect x="11.4" y="1.2" width="7.6" height="7.3" rx="2.6" fill="none" stroke="#6e6e6e" stroke-width="2.1"/><path d="M8,2.2 H12" stroke="#6e6e6e" stroke-width="1.8"/></svg>
<svg style="left:440px;top:691.5px;" width="7" height="11" viewBox="0 0 7 11"><path d="M0.7,0.7 L5.6,5.2 L0.7,9.8" fill="none" stroke="#6e6e6e" stroke-width="1.3"/></svg>
<svg style="left:440px;top:766.8px;" width="7" height="11" viewBox="0 0 7 11"><path d="M0.7,0.7 L5.6,5.2 L0.7,9.8" fill="none" stroke="#6e6e6e" stroke-width="1.3"/></svg>
<svg style="left:460px;top:689.5px;" width="17" height="18" viewBox="0 0 17 18"><text x="0.2" y="5.4" font-family="Liberation Sans" font-size="6.6" fill="#444">1</text><text x="0" y="11.4" font-family="Liberation Sans" font-size="6.6" fill="#444">2</text><text x="0" y="17.6" font-family="Liberation Sans" font-size="6.6" fill="#444">3</text><rect x="6.7" y="1.1" width="9.6" height="3.4" fill="#6ec4e6"/><rect x="6.7" y="7.6" width="9.6" height="3.3" fill="#6ec4e6"/><rect x="6.7" y="13.8" width="9.6" height="3.3" fill="#6ec4e6"/></svg>
<svg style="left:461.5px;top:715.6px;" width="15" height="15" viewBox="0 0 15 15"><rect x="0" y="0" width="14.8" height="14.6" fill="#87cfe8"/><text x="7.4" y="11.4" text-anchor="middle" font-family="Liberation Sans" font-weight="bold" font-size="10.5" fill="#3d3d3d" textLength="10.5" lengthAdjust="spacingAndGlyphs">01</text></svg>
<svg style="left:461.5px;top:740.5px;" width="15" height="15" viewBox="0 0 15 15"><rect x="0" y="0" width="14.8" height="14.6" fill="#87cfe8"/><text x="7.4" y="11.4" text-anchor="middle" font-family="Liberation Sans" font-weight="bold" font-size="10.5" fill="#3d3d3d" textLength="10.5" lengthAdjust="spacingAndGlyphs">01</text></svg>
<svg style="left:461.5px;top:765.2px;" width="15" height="15" viewBox="0 0 15 15"><rect x="0" y="0.5" width="5.9" height="5.7" fill="#87cfe8"/><rect x="7.6" y="0" width="7.2" height="6.2" fill="#a9b2ba"/><rect x="0" y="8" width="5.9" height="6.9" fill="#a9b2ba"/><rect x="7.6" y="8" width="7.2" height="6.9" fill="#87cfe8"/></svg>
<svg style="left:597px;top:690px;z-index:3" width="226" height="17" viewBox="0 0 226 17"><path d="M0.5,7.3 L202,5.2 L202,10.8 L0.5,8.8 Z" fill="#ea1c24"/><path d="M199,0.8 L220,8 L199,15.8 L203,8 Z" fill="#ea1c24"/></svg>
<div class="a" style="z-index:3;left:826.5px;top:677.2px;width:330px;height:36.7px;border:4px solid #ea1c24;border-radius:2px"></div>
<svg style="left:39.5px;top:927px;" width="11" height="13" viewBox="0 0 11 13"><path d="M0.2,0.1 L0.2,12.2 L10.3,6 Z" fill="#6e6e6e"/></svg>
<svg style="left:108.5px;top:927.5px;" width="13.5" height="10" viewBox="0 0 13.5 10"><g fill="#6e6e6e"><rect x="0.3" y="0.3" width="2.2" height="2"/><rect x="4" y="0.3" width="9" height="2"/><rect x="0.3" y="4.2" width="2.2" height="2"/><rect x="4" y="4.2" width="9" height="2"/><rect x="0.3" y="8.2" width="2.2" height="2"/><rect x="4" y="8.2" width="9" height="2"/></g></svg>
<svg style="left:193px;top:925.8px;" width="13" height="13" viewBox="0 0 13 13"><circle cx="6.5" cy="6.5" r="6.5" fill="#6e6e6e"/><rect x="5.4" y="2.7" width="2.2" height="5.2" fill="#fff"/><rect x="5.4" y="8.9" width="2.2" height="2" fill="#fff"/></svg>
<svg style="left:296.3px;top:925.5px;" width="14.5" height="15.5" viewBox="0 0 14.5 15.5"><use href="#bug" style="color:#6e6e6e;--bg:#7a7a7a"/></svg>
<svg style="left:306.2px;top:936.3px;" width="5" height="5" viewBox="0 0 5 5"><circle cx="2.5" cy="2.5" r="2.4" fill="#1ee81e" stroke="#2a8a2a" stroke-width="0.5"/></svg>
<svg style="left:385px;top:926px;" width="14" height="13.2" viewBox="0 0 14 13.2"><rect x="0" y="0" width="14" height="13.2" fill="#6e6e6e"/><path d="M2.6,3 L5.6,5.7 L2.6,8.4" fill="none" stroke="#fff" stroke-width="1.3"/><path d="M7,10 H11.5" stroke="#fff" stroke-width="1.2"/></svg>
<svg style="left:486px;top:926px;" width="14.5" height="14" viewBox="0 0 14.5 14"><use href="#pylogog"/></svg>
<svg style="left:1610px;top:926px;" width="16" height="15.5" viewBox="0 0 16 15.5"><path d="M7.8,0.8 A7,7 0 1 0 7.8,14.8 H14.8 V7.8 A7,7 0 0 0 7.8,0.8 Z" fill="none" stroke="#6e6e6e" stroke-width="1.3"/></svg>
<svg style="left:7px;top:951px;" width="16" height="16" viewBox="0 0 16 16"><path d="M0.8,3.7 V15.3 H12.3" fill="none" stroke="#6e6e6e" stroke-width="1.1"/><rect x="3.4" y="0.8" width="11.8" height="11.6" fill="none" stroke="#6e6e6e" stroke-width="1.2"/></svg>
<svg style="left:1700.5px;top:951.5px;" width="15" height="14" viewBox="0 0 15 14"><path d="M1.2,7 V3.8 A3.2,3.2 0 0 1 7.6,3.8" fill="none" stroke="#6e6e6e" stroke-width="1.3"/><rect x="4.5" y="6.8" width="10" height="6.8" fill="#6e6e6e"/></svg>
</body></html>
